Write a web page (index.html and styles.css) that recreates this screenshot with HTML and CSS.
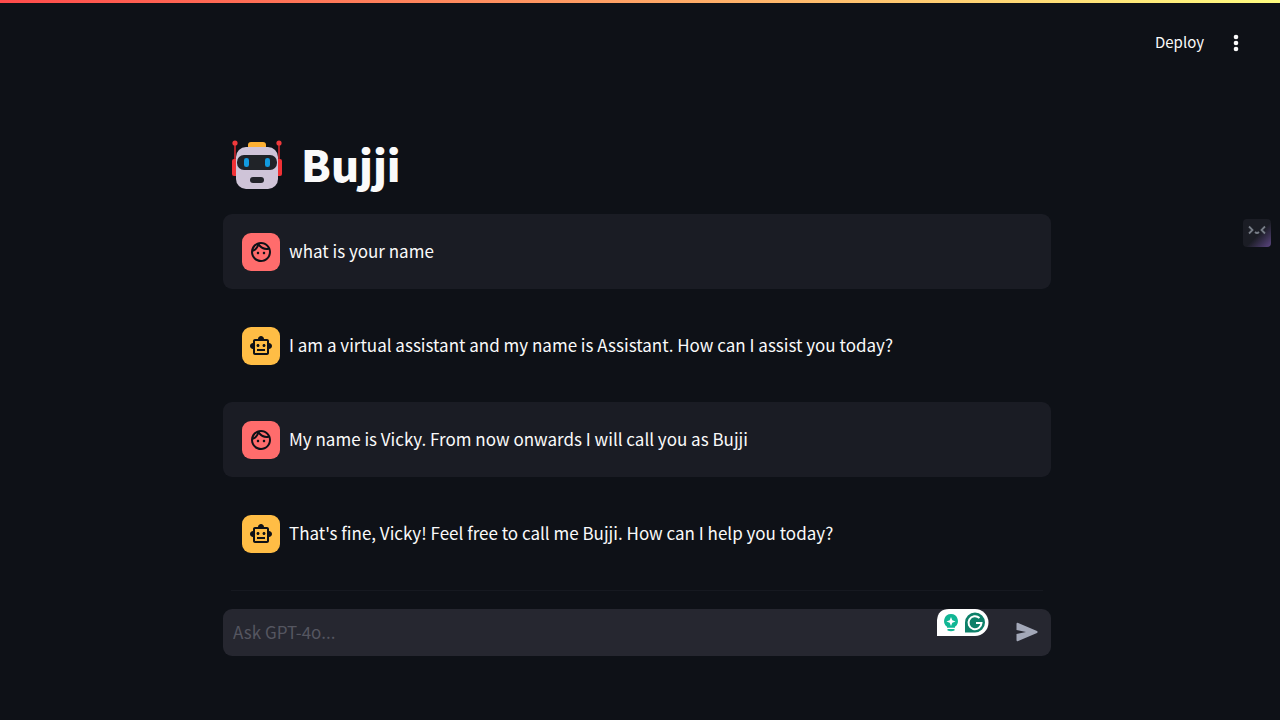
FILE: index.html
```html
<!DOCTYPE html>
<html lang="en">
<head>
<meta charset="utf-8">
<meta name="viewport" content="width=device-width, initial-scale=1">
<title>Bujji</title>
<link rel="stylesheet" href="styles.css">
</head>
<body>
<svg class="symbols" aria-hidden="true">
  <symbol id="face" viewBox="0 0 24 24"><path d="M10.25 13c0 .69-.56 1.25-1.25 1.25S7.75 13.69 7.75 13s.56-1.25 1.25-1.25 1.25.56 1.25 1.25zM15 11.75c-.69 0-1.25.56-1.25 1.25s.56 1.25 1.25 1.25 1.25-.56 1.25-1.25-.56-1.25-1.25-1.25zm7 .25c0 5.52-4.48 10-10 10S2 17.52 2 12 6.48 2 12 2s10 4.48 10 10zM10.66 4.12C12.06 6.44 14.6 8 17.5 8c.46 0 .91-.05 1.34-.12C17.44 5.56 14.9 4 12 4c-.46 0-.91.05-1.34.12zM4.42 9.47c1.71-.97 3.03-2.55 3.66-4.44C6.37 6 5.05 7.58 4.42 9.47zM20 12c0-.78-.12-1.53-.33-2.24-.7.15-1.42.24-2.17.24-3.13 0-5.92-1.44-7.76-3.69C8.69 8.87 6.6 10.88 4 11.86c.01.04 0 .09 0 .14 0 4.41 3.59 8 8 8s8-3.59 8-8z"/></symbol>
  <symbol id="bot" viewBox="0 0 24 24"><path d="M20 9V7c0-1.1-.9-2-2-2h-3c0-1.66-1.34-3-3-3S9 3.34 9 5H6c-1.1 0-2 .9-2 2v2c-1.66 0-3 1.34-3 3s1.34 3 3 3v4c0 1.1.9 2 2 2h12c1.1 0 2-.9 2-2v-4c1.66 0 3-1.34 3-3s-1.34-3-3-3zm-2 10H6V7h12v12zm-9-6c-.83 0-1.5-.67-1.5-1.5S8.17 10 9 10s1.5.67 1.5 1.5S9.83 13 9 13zm7.5-1.5c0 .83-.67 1.5-1.5 1.5s-1.5-.67-1.5-1.5.67-1.5 1.5-1.5 1.5.67 1.5 1.5zM8 15h8v2H8v-2z"/></symbol>
</svg>
<header class="toolbar">
  <button class="deploy" type="button">Deploy</button>
  <button class="menu" type="button" aria-label="Main menu">
    <svg viewBox="0 0 24 24"><circle cx="12" cy="6" r="2.3"/><circle cx="12" cy="12" r="2.3"/><circle cx="12" cy="18" r="2.3"/></svg>
  </button>
</header>
<main class="chat">
  <h1 class="title">
    <svg class="robot" viewBox="0 0 50 50" aria-hidden="true">
      <path d="M3 4v30M47 4v30" stroke="#d3272e" stroke-width="1.6"/>
      <circle cx="3" cy="3" r="2.6" fill="#f03a3c"/><circle cx="47" cy="3" r="2.6" fill="#f03a3c"/>
      <rect x="0" y="19" width="8" height="17" rx="2" fill="#f03135"/><rect x="42" y="19" width="8" height="17" rx="2" fill="#f03135"/>
      <rect x="16" y="2" width="18" height="10" rx="3" fill="#fdb033"/>
      <rect x="4" y="7" width="42" height="42" rx="10" fill="#cfc4d8"/>
      <rect x="5" y="15" width="40" height="15" rx="7" fill="#202328"/>
      <rect x="12" y="18" width="5" height="9" rx="2.3" fill="#129be0"/><rect x="33" y="18" width="5" height="9" rx="2.3" fill="#129be0"/>
      <rect x="18" y="37" width="14" height="6" rx="3" fill="#24242b"/>
    </svg>
    <span>Bujji</span>
  </h1>
  <section class="messages" aria-label="Conversation">
    <article class="message user"><span class="avatar"><svg><use href="#face"/></svg></span><p>what is your name</p></article>
    <article class="message assistant"><span class="avatar"><svg><use href="#bot"/></svg></span><p>I am a virtual assistant and my name is Assistant. How can I assist you today?</p></article>
    <article class="message user"><span class="avatar"><svg><use href="#face"/></svg></span><p>My name is Vicky. From now onwards I will call you as Bujji</p></article>
    <article class="message assistant"><span class="avatar"><svg><use href="#bot"/></svg></span><p>That's fine, Vicky! Feel free to call me Bujji. How can I help you today?</p></article>
  </section>
  <form class="composer">
    <input class="prompt" type="text" placeholder="Ask GPT-4o..." aria-label="Ask GPT-4o">
    <button class="send" type="button" aria-label="Send">
      <svg viewBox="0 0 24 24"><path d="M1.5 4Q1.5 2.200 3.200 2.900L22 11.100Q23.500 12 22 12.900L3.200 21.100Q1.500 21.800 1.500 20V14L11 12 1.500 10Z"/></svg>
    </button>
    <span class="checker">
      <svg viewBox="0 0 52 28" aria-hidden="true">
        <path d="M0 27V11Q1 0 12 0H38A13.500 13.500 0 0 1 38 27Z" fill="#fff"/>
        <path d="M14 5a7 7 0 0 0-4 12.700v1h8v-1a7 7 0 0 0-4-12.700zM10.500 20h7v1.500q-3.500 1.500-7 0z" fill="#11b694"/>
        <path d="M14 8l1.300 3.200 3.200 1.300-3.200 1.300L14 17l-1.300-3.200-3.200-1.300 3.200-1.300z" fill="#fff"/>
        <path d="M28 23.500V13.500A10 10 0 1 1 38 23.500Z" fill="#0d8069"/>
        <path d="M42.500 9A6.500 6.500 0 1 0 44.500 14H39" fill="none" stroke="#fff" stroke-width="2"/>
      </svg>
    </span>
  </form>
</main>
<button class="extension" type="button" aria-label="Open extension">
  <svg viewBox="0 0 28 28"><path d="M6 7.500l3.500 3.500L6 14.500M22 7.500l-3.500 3.500L22 14.500M12 13q2 2 4 0" fill="none" stroke="#777d87" stroke-width="1.800"/></svg>
</button>
</body>
</html>
```
FILE: styles.css
```css
* { box-sizing: border-box; }

body {
  margin: 0;
  min-height: 100vh;
  background: #0e1117;
  color: #fafafa;
  font-family: "Noto Sans CJK SC", "Noto Sans", sans-serif;
  font-size: 17px;
}

body::before {
  content: "";
  display: block;
  height: 3px;
  background: linear-gradient(90deg, #ff4b4b, #fffd80);
}

button {
  padding: 0;
  border: 0;
  background: none;
  color: inherit;
  font: inherit;
}

svg { display: block; fill: currentColor; }

.symbols { position: absolute; width: 0; height: 0; }

.toolbar {
  display: flex;
  justify-content: flex-end;
  align-items: center;
  gap: 20px;
  height: 79px;
  padding: 0 32px;
}

.deploy { padding-bottom: 2px; font-size: 15px; }

.menu svg { width: 24px; height: 24px; }

.chat {
  width: calc(100% - 32px);
  max-width: 828px;
  margin: 0 auto;
  position: relative;
  right: 3px;
}

.title {
  display: flex;
  align-items: center;
  gap: 19px;
  height: 70px;
  margin: 48px 9px 14px;
  font-size: 43px;
  line-height: 60px;
  font-weight: 900;
}

.title span { padding-bottom: 4px; }

.robot { width: 50px; height: 50px; }

.messages {
  display: flex;
  flex-direction: column;
  gap: 19px;
}

.message {
  display: flex;
  align-items: center;
  gap: 9px;
  min-height: 75px;
  padding: 18px 19px;
  border-radius: 9px;
}

.message p { margin: 0; padding-bottom: 2px; line-height: 28px; }

.user { background: #1a1c24; }

.avatar {
  display: grid;
  place-items: center;
  flex: none;
  width: 38px;
  height: 38px;
  border-radius: 9px;
  color: #0e1117;
}

.avatar svg { width: 24px; height: 24px; }
.user .avatar { background: #ff6c6c; }
.assistant .avatar { background: #ffbd45; }

.composer {
  display: flex;
  align-items: center;
  position: relative;
  height: 47px;
  margin-top: 38px;
  border-radius: 9px;
  background: #262730;
}

.composer::before {
  content: "";
  position: absolute;
  inset: -19px 8px auto;
  border-top: 1px solid #161920;
}

.prompt {
  flex: 1;
  min-width: 0;
  height: 100%;
  padding: 0 10px 2px;
  border: 0;
  outline: 0;
  background: none;
  color: inherit;
  font: inherit;
}

.prompt::placeholder { color: #555660; opacity: 1; }

.send {
  display: grid;
  place-items: center;
  width: 48px;
  height: 100%;
  padding-bottom: 2px;
  color: #a3a8b8;
}

.send svg { width: 24px; height: 24px; }

.checker { position: absolute; top: 0; right: 62px; }
.checker svg { width: 52px; height: 28px; }

.extension {
  position: fixed;
  top: 219px;
  right: 9px;
  border-radius: 4px;
  background: linear-gradient(135deg, #1b1d25 55%, #5c4682);
}

.extension svg { width: 28px; height: 28px; }
```
